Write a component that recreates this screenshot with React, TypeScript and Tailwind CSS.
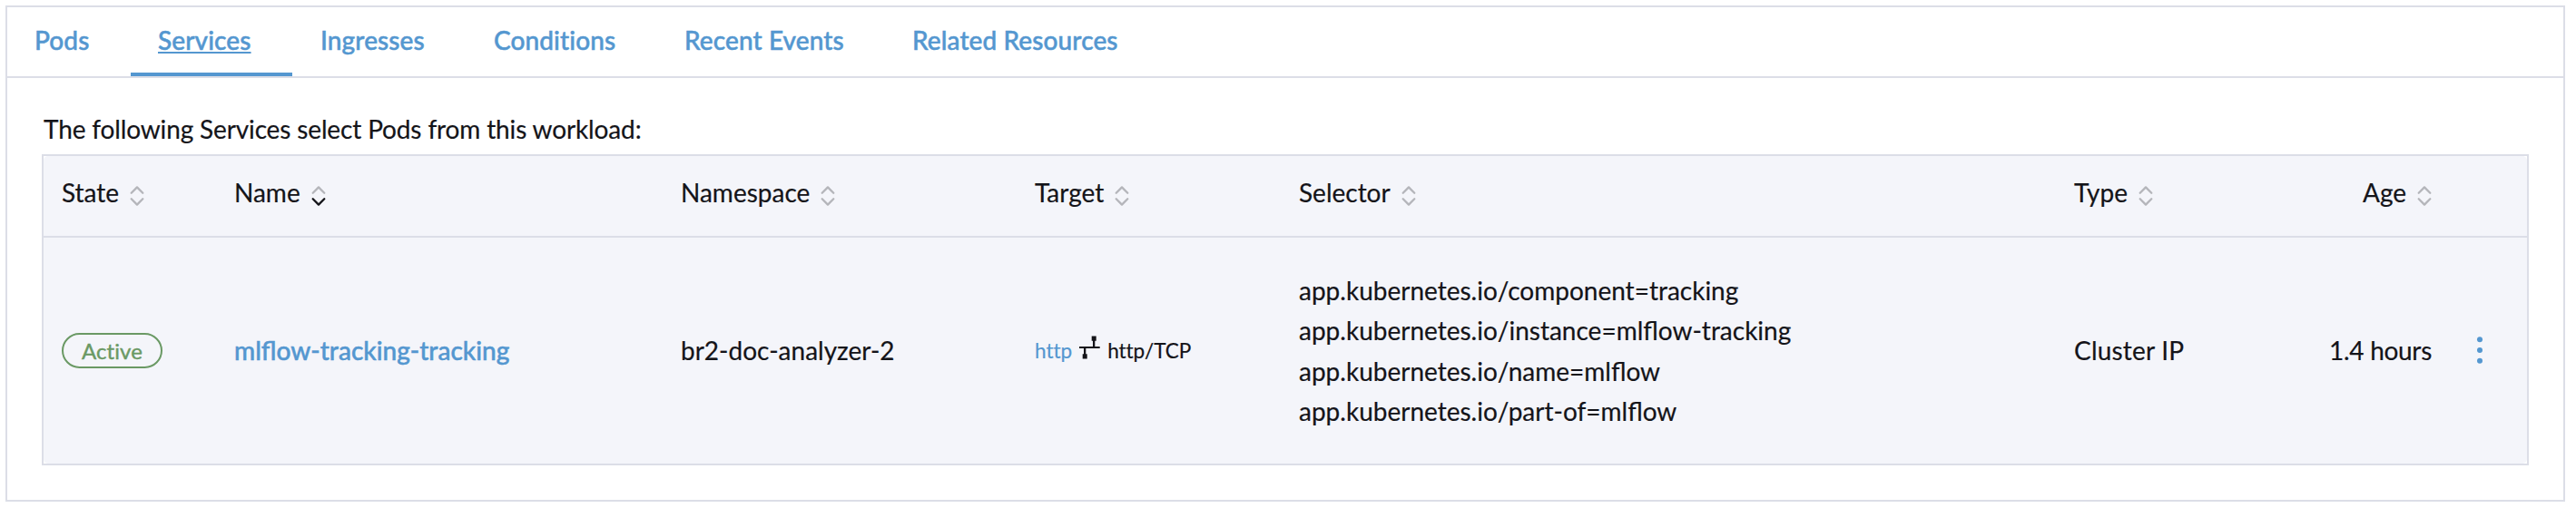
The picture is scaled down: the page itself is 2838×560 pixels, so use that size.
import React from "react";

type SortDirection = "asc" | "desc" | null;

const TABS = [
  { label: "Pods", width: "w-[136px]" },
  { label: "Services", width: "w-[178px] mr-px" },
  { label: "Ingresses", width: "w-[191px]" },
  { label: "Conditions", width: "w-[210px]" },
  { label: "Recent Events", width: "w-[251px]" },
  { label: "Related Resources", width: "w-[302px]" },
];

const COLUMNS: { label: string; sort: SortDirection }[] = [
  { label: "State", sort: null },
  { label: "Name", sort: "desc" },
  { label: "Namespace", sort: null },
  { label: "Target", sort: null },
  { label: "Selector", sort: null },
  { label: "Type", sort: null },
  { label: "Age", sort: null },
];

const SELECTORS = [
  "app.kubernetes.io/component=tracking",
  "app.kubernetes.io/instance=mlflow-tracking",
  "app.kubernetes.io/name=mlflow",
  "app.kubernetes.io/part-of=mlflow",
];

const ROW_GRID =
  "grid grid-cols-[190px_492px_390px_291px_854px_200px_194px_1fr] pl-5";

function SortIcon({ sort }: { sort: SortDirection }) {
  return (
    <svg className="mt-2 h-6 w-4 shrink-0" viewBox="0 0 16 24" fill="none" strokeWidth="2.3" strokeLinecap="round" strokeLinejoin="round">
      <path d="M1.7 8.7L8 2.4L14.3 8.7" stroke={sort === "asc" ? "#141419" : "#b4b5ba"} />
      <path d="M1.7 15.3L8 21.6L14.3 15.3" stroke={sort === "desc" ? "#141419" : "#b4b5ba"} />
    </svg>
  );
}

function EndpointIcon() {
  return (
    <svg className="mb-[5px] h-[26px] w-[23px] shrink-0" viewBox="0 0 23 26" fill="#141419">
      <path d="M13.7 0.5H18.7V5.7H17.3V12H22.7V14H7.3V20.3H8.7V25.5H3.7V20.3H5V14H0V12H15V5.7H13.7Z" />
    </svg>
  );
}

function RowMenuIcon() {
  return (
    <svg className="h-[32px] w-[8px]" viewBox="0 0 8 32" fill="#5497d0">
      <circle cx="4" cy="4.3" r="3" />
      <circle cx="4" cy="16" r="3" />
      <circle cx="4" cy="27.7" r="3" />
    </svg>
  );
}

export default function App() {
  return (
    <div className="h-[560px] w-[2838px] overflow-hidden bg-white pt-1.5 pl-1.5 font-['Lato',sans-serif] text-[28px] text-[#141419] [-webkit-text-stroke:0.2px]">
      <section className="h-[547px] w-[2820px] border-2 border-[#dcdee7]">
        <nav className="flex h-[78px] border-b-2 border-[#dcdee7]">
          {TABS.map((tab) => (
            <a
              key={tab.label}
              className={`flex h-[76px] items-start border-b-4 pt-[18px] pl-[30px] leading-[36px] font-medium tracking-[0.1px] whitespace-nowrap text-[#5497d0] [-webkit-text-stroke:0.5px] ${tab.width} ${
                tab.label === "Services" ? "border-[#5497d0] underline" : "border-transparent"
              }`}
            >
              {tab.label}
            </a>
          ))}
        </nav>
        <div className="px-[38px] pt-[38px]">
          <p className="h-[46px] pl-0.5 leading-[36px] tracking-[-0.14px]">The following Services select Pods from this workload:</p>
          <div className="h-[343px] border-2 border-[#dcdee7]">
            <div className="h-full overflow-hidden rounded-[5px] bg-[#f4f5fa]">
              <div className={`${ROW_GRID} h-[90px] border-b-2 border-[#dcdee7]`}>
                {COLUMNS.map((col) => (
                  <div
                    key={col.label}
                    className={`flex h-[80px] items-center gap-3 ${col.label === "Age" ? "justify-end" : ""}`}
                  >
                    <span>{col.label}</span>
                    <SortIcon sort={col.sort} />
                  </div>
                ))}
              </div>
              <div className={`${ROW_GRID} h-[248px] items-center`}>
                <span className="mt-px flex h-[39px] w-[111px] items-center justify-center rounded-[20px] border-2 border-[#6a9964] text-[24px] tracking-[0.05px] text-[#6a9964] [-webkit-text-stroke:0.4px]">
                  Active
                </span>
                <a className="font-medium text-[#5497d0] [-webkit-text-stroke:0.5px]">mlflow-tracking-tracking</a>
                <span>br2-doc-analyzer-2</span>
                <div className="flex items-center gap-2 text-[22.6px] tracking-[-0.05px]">
                  <span className="mt-px text-[#5497d0]">http</span>
                  <EndpointIcon />
                  <span className="mt-px">http/TCP</span>
                </div>
                <div className="pt-px leading-[44.3px]">
                  {SELECTORS.map((selector) => (
                    <div key={selector}>{selector}</div>
                  ))}
                </div>
                <span className="tracking-[0.2px]">Cluster IP</span>
                <span className="text-right tracking-[-0.3px]">1.4 hours</span>
                <div className="flex pl-[49px]">
                  <RowMenuIcon />
                </div>
              </div>
            </div>
          </div>
        </div>
      </section>
    </div>
  );
}
